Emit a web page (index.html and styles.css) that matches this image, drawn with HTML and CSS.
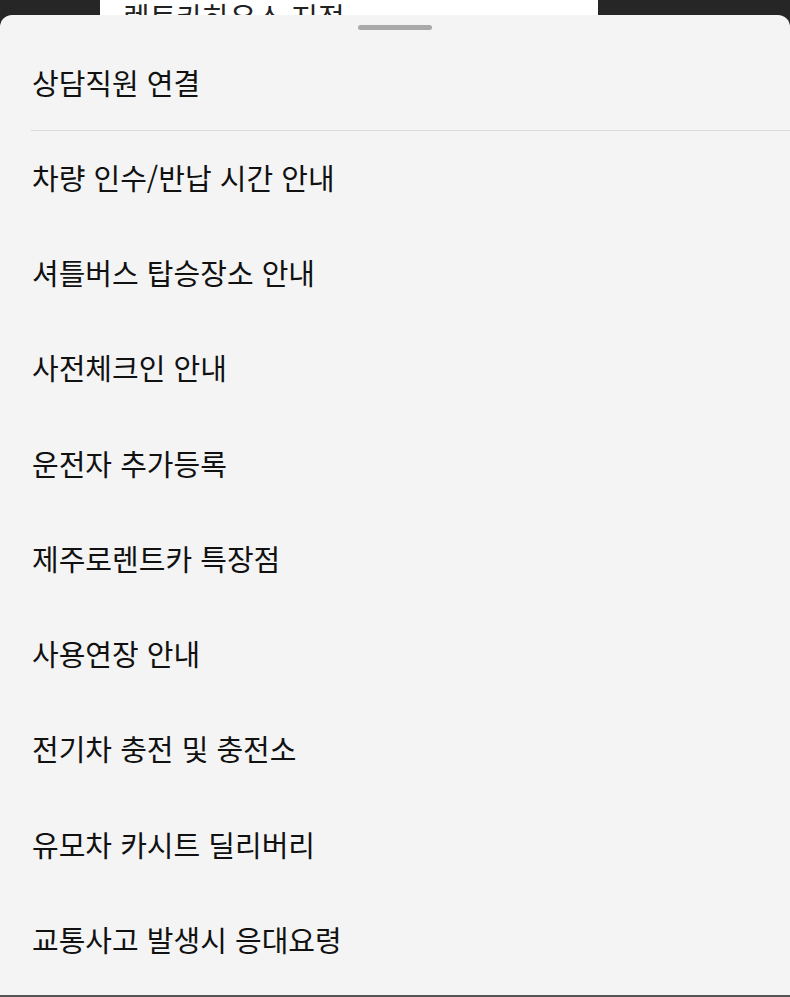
FILE: index.html
```html
<!DOCTYPE html>
<html lang="ko">
<head>
<meta charset="utf-8">
<title>상담 메뉴</title>
<link rel="stylesheet" href="styles.css">
</head>
<body>
<div class="screen">
  <div class="backdrop">
    <div class="back-card">
      <div class="back-title">렌트카하우스 지점</div>
    </div>
  </div>
  <div class="sheet">
    <div class="handle-wrap"><div class="handle"></div></div>
    <div class="item item-first">상담직원 연결</div>
    <div class="divider"></div>
    <div class="item">차량 인수/반납 시간 안내</div>
    <div class="item">셔틀버스 탑승장소 안내</div>
    <div class="item">사전체크인 안내</div>
    <div class="item">운전자 추가등록</div>
    <div class="item">제주로렌트카 특장점</div>
    <div class="item">사용연장 안내</div>
    <div class="item">전기차 충전 및 충전소</div>
    <div class="item">유모차 카시트 딜리버리</div>
    <div class="item">교통사고 발생시 응대요령</div>
  </div>
</div>
</body>
</html>
```
FILE: styles.css
```css
* { box-sizing: border-box; }
html, body {
  margin: 0;
  padding: 0;
  width: 790px;
  height: 997px;
  overflow: hidden;
  background: #262626;
  font-family: "Noto Sans CJK KR", "Noto Sans", sans-serif;
}
.screen {
  position: relative;
  width: 790px;
  height: 997px;
  background: #262626;
}
.backdrop {
  display: flex;
  padding-left: 100px;
  height: 60px;
}
.back-card {
  width: 498px;
  height: 60px;
  background: #ffffff;
  padding: 2px 0 0 23px;
}
.back-title {
  font-size: 29px;
  line-height: 29px;
  color: #222;
}
.sheet {
  position: absolute;
  left: 0;
  top: 15px;
  width: 790px;
  height: 980px;
  background: #f4f4f4;
  border-radius: 12px 12px 0 0;
  display: flex;
  flex-direction: column;
}
.handle-wrap {
  display: flex;
  justify-content: center;
  padding-top: 10px;
}
.handle {
  width: 74px;
  height: 5px;
  border-radius: 3px;
  background: #a9a9a9;
}
.item {
  height: 95.3px;
  flex: 0 0 auto;
  display: flex;
  align-items: center;
  padding-left: 32px;
  padding-bottom: 4px;
  font-size: 29px;
  line-height: 40px;
  color: #111;
}
.item-first {
  height: 92px;
  margin-top: 8px;
}
.divider {
  height: 1px;
  margin-left: 31px;
  background: #d9d9d9;
}
.screen::after {
  content: "";
  position: absolute;
  left: 0;
  bottom: 0;
  width: 790px;
  height: 2px;
  background: #555555;
}
```
